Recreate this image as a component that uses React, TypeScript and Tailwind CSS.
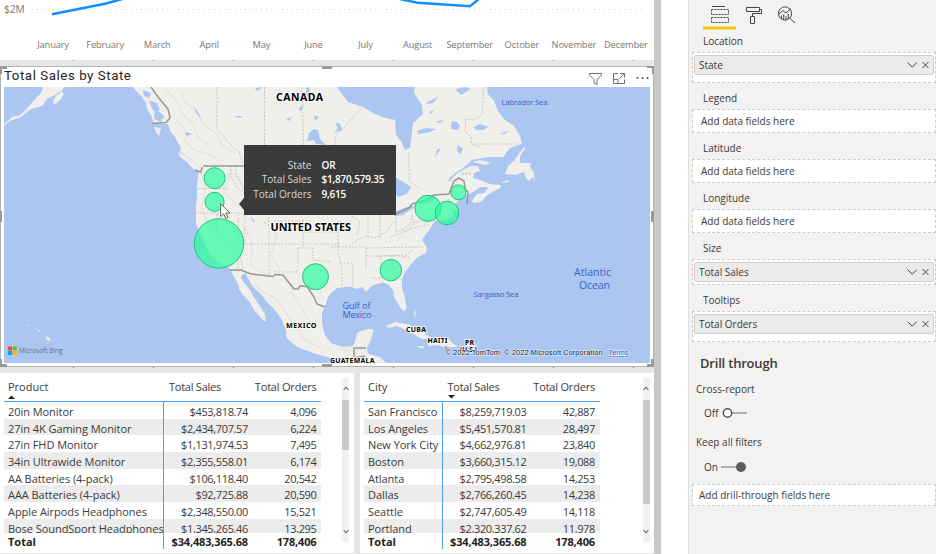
import React from "react";

const MONTHS = [
  "January", "February", "March", "April", "May", "June",
  "July", "August", "September", "October", "November", "December",
];

type Row = [string, string, string];

const PRODUCTS: Row[] = [
  ["20in Monitor", "$453,818.74", "4,096"],
  ["27in 4K Gaming Monitor", "$2,434,707.57", "6,224"],
  ["27in FHD Monitor", "$1,131,974.53", "7,495"],
  ["34in Ultrawide Monitor", "$2,355,558.01", "6,174"],
  ["AA Batteries (4-pack)", "$106,118.40", "20,542"],
  ["AAA Batteries (4-pack)", "$92,725.88", "20,590"],
  ["Apple Airpods Headphones", "$2,348,550.00", "15,521"],
  ["Bose SoundSport Headphones", "$1,345,265.46", "13,295"],
];

const CITIES: Row[] = [
  ["San Francisco", "$8,259,719.03", "42,887"],
  ["Los Angeles", "$5,451,570.81", "28,497"],
  ["New York City", "$4,662,976.81", "23,840"],
  ["Boston", "$3,660,315.12", "19,088"],
  ["Atlanta", "$2,795,498.58", "14,253"],
  ["Dallas", "$2,766,260.45", "14,238"],
  ["Seattle", "$2,747,605.49", "14,118"],
  ["Portland", "$2,320,337.62", "11,978"],
];

const BUBBLES = [
  [214.6, 178.2, 10.5],
  [214.6, 201.8, 9.5],
  [219, 243.5, 24.7],
  [315.5, 276.7, 13],
  [428, 208.3, 13],
  [447, 213, 11.8],
  [458.4, 192.3, 7.5],
  [390.9, 270.2, 10.7],
];

function LineChart() {
  return (
    <div className="relative h-[60px] shrink-0 bg-white">
      <svg className="block h-[30px] w-[654px]" viewBox="0 0 654 30">
        <path d="M32 9.5H644" stroke="#d2d2d2" strokeWidth="1" strokeDasharray="1 4.2" />
        <path d="M52 14.3L106 3.5L122 -1" fill="none" stroke="#118dff" strokeWidth="2.4" />
        <path d="M400 -1L418 2.8L470 6.2L479 -1" fill="none" stroke="#118dff" strokeWidth="2.4" />
      </svg>
      <span className="absolute left-[4px] top-[2px] text-[10.3px] leading-[14px] tracking-[-0.2px] text-[#777]">$2M</span>
      <div className="ml-[27px] flex h-[30px] w-[625px] items-center text-[9.3px] tracking-[-0.15px] text-[#777]">
        {MONTHS.map((m) => (
          <div key={m} className="w-[52.1px] text-center leading-[14px]">{m}</div>
        ))}
      </div>
    </div>
  );
}

function GridTicks() {
  return (
    <div className="flex gap-[79px] pl-[73px]">
      {[0, 1, 2, 3, 4, 5, 6, 7].map((i) => (
        <i key={i} className="block h-px w-px shrink-0 bg-[#777]" />
      ))}
    </div>
  );
}

function WorldMap() {
  return (
    <svg className="block h-[276px] w-[646px]" viewBox="4 87 646 276">
      <rect x="4" y="87" width="646" height="276" fill="#acc6f2" />
      <g fill="#f0efec">
        {/* North America */}
        <path d="M133 87L137 92L142 97L146 103L147 109L151 115L154 124L168 124L170 131L175 137L178 143L181 148L180 152L188 157L194 162L200 166L199 171L198 176L197 185L197 198L196 206L196 223L200 233L204 242L210 255L218 262L230 268.5L233 275L238 284L239 289L243 295L249 301L254 310L263 320.5L266 321L265 314L259 305L254 297L250 290L246 285L242 280L241 276L245 273L249 280L253 287L261 294L267 302L275 310L282 320L286 330L286.500 338L297 347L313 353L330 358L342 361L350 363L386 363L380 357L368 354L367 348L371 340L373.500 329.500L369 329L361 331L357 333L355 342L353 346L342 347L331 343L325 335L322 323L322 313L325 306L328 297L331 293L337 288L350 286.500L357 289L362 287L366 292L373 285L383 282.500L389 285L393.500 291L394 297L398 304L402 310L405 311L406.500 307L405 298L402 288L402 279L405 272L413 262L418 257L426 253L427 248L422 240L426 234L430 229L432 225L435 221L446 219.500L454 216L453 211L459 210L455 204L460 199L466 196L473 192L480 187L489 187L484 193L477 194L472 201L474 203L481 202L487 195L500 188L501 185L490 184L483 181L473 178L474 173L480 171L478 166L470 166L458 173L447 183L450 177L463 168L472 160L488 157L503 157L510 148L522 144L520 136L514 126L504 119L498 111L494 101L488 94L487 87L415 87L414 93L422 105L423 114L413 123L411 140L410 148L405 150L401 141L396 135L395 120L382 117L373 113L363 107L348 102L342 94L337 87Z" />
        {/* Alaska peninsula, Kodiak, Vancouver Island, Newfoundland, islands */}
        <path d="M4 124L12 117L20 115L29 106L36 98L41 93L43 87L65 87L61 91L53 96L47 99L42 106L31 109L21 117L10 121L4 126Z" />
        <path d="M53 101L56 96L62 91L64 94L60 100L54 105Z" />
        <path d="M154 127L161 128L159 136L157 134Z" />
        <path d="M178 152L186 156L195 163L202 167L201 172L194 170L187 162L181 158Z" />
        <path d="M524 147L518 155L514 161L508 166L505 174L515 175L524 172L526 178L529 181L533 177L535 183L534 173L530 167L531 163L520 163L520 156L525 149Z" />
        <path d="M473 162L480 160L491 163L485 165Z" />
        <path d="M386 326L395 322L410 325L422 332L433 339L422 339L408 331L397 326L388 328Z" />
        <path d="M428 344L436 337L447 338L454 344L458 347L444 347L438 345L429 346Z M416 346L424 346L423 349Z M465 343L474 344L472 347L465 346Z" />
        <path d="M27 325L30 325L29 326Z M35 328L41 331L40 332Z M46 336L51 339L49 341L46 339Z" />
        <path d="M502 182L508 180L509 182L503 183Z M414 313L416 310L415 318Z" />
      </g>
      {/* Relief shading */}
      <g fill="none" stroke="#e2e0dc" strokeWidth="1.1" opacity="0.9">
        <path d="M166 90L178 102L181 113L193 124L198 137L208 145M181 91L185 102L196 111L203 124L217 134L222 146L235 153M176 119L188 134L184 141L196 151L208 154L218 160" />
        <path d="M201 172L205 187L202 210L208 222L226 239M231 170L224 191L237 206M242 224L252 242L251 266L270 277M263 221L277 235L271 256L281 271M232 172L240 180L246 192" />
        <path d="M254 284L265 293L277 299L288 316L303 338L320 348M291 291L302 309L313 328M397 241L408 229L421 217L431 200M336 348L348 351L358 350M215 266L229 264" />
      </g>
      {/* Lakes and fjords */}
      <g fill="#acc6f2">
        <path d="M193 105L199 114L203 120L197 114Z M255 88L263 87L257 91Z M234 116L243 116L240 118Z M286 119L292 117L289 121Z M298 109L304 104L301 111Z M314 115L319 117L315 121Z M314 129L318 130L320 139L326 145L316 144L314 140L307 141L309 133Z M306 88L310 87L309 98L306 94Z" />
        <path d="M335 122L340 124L342 130L334 133L338 128Z M427 102L438 97L433 103L427 104Z M417 131L426 128L436 129L430 132L419 134Z M429 112L434 110L431 114Z M452 121L457 122L460 126L457 130L451 129Z M474 127L480 124L488 127L483 130L476 130Z M436 122L445 119L440 123Z M458 145L463 149L461 154L457 151Z M437 150L441 148L435 158Z M455 89L465 87L471 89L461 95Z M500 134L509 130L505 134Z M250 216L255 221L254 223Z" />
        <path d="M391 175L402 181L411 187L407 194L398 197L392 190Z M394 212L410 206L416 206L403 215L395 216Z M419 202L427 199L436 197L431 202L420 204Z" />
        <path d="M143 90L151 93L149 98L144 96Z M149 100L157 103L160 110L153 111Z M159 113L165 117L161 120Z M185 132L193 134L186 136Z M155 108L163 115L161 122L154 119Z M396 187L403 192L397 195Z" />
      </g>
      {/* State and province lines */}
      <g fill="none" stroke="#c9c5c1" strokeWidth="1" strokeDasharray="2 1.5">
        <path d="M217 87V130L228 142L239 152L244 166M264.500 87V166M302 87L304 166M335 145V137L363 107M409 152V181L421 189M196 213H274M198 189L211 188L230 189M231 166V176L238 189L244 193M217 214V234L241 257L243 270M245 215V244M236 166V174L244 190M229 244H340M269 217V245M269 244V276M274 221H303V246M298 248V272H274M298 248H313V260L330 262M303 219V232H338M338 221V252L342 270V286M331 247H366V269M352 244L358 239L367 236L375 238L386 232L393 222M368 215V240M380 215V238M352 216L360 222L357 235M340 263H353V286M366 256H401L411 258M366 248L423 247M381 255V280M392 256V274L402 280M371 278H390M396 214V232L404 229L412 222H431M412 215V222M391 237L410 229L430 224M377 256L403 255" />
        <path d="M484 87L482 115L474 120L466 119L465 131L471 137L472 144H517M462 174H472M474 145L481 147M462 174L470 173M238 214V274M402 258L413 250M440 208L441 218M448 199L451 212" />
      </g>
      {/* National borders */}
      <g fill="none" stroke="#9b9793" strokeWidth="1.5" strokeLinejoin="round">
        <path d="M151 87L158 97L168 109L170 118L166 122.500L152 123.500M203 166H244" />
        <path d="M230 270H241L251 274L273 276.500L275 274.500L283 275L290 284L294 289L298 289L300 286L307 286.500L314 297L317 304L325 307" />
        <path d="M394 215L410 207L412 204L426 200L434 195L449 194L454 181L459 178L464 181L465 189L468 192L467 204M354 358V348H366M354 358L365 356M195 170L201 172L202 167M446 346V351" />
      </g>
      <g fontFamily="'Noto Sans', 'Open Sans', sans-serif" fontWeight="700" fill="#000" stroke="#fff" strokeWidth="2" strokeOpacity="0.75" paintOrder="stroke">
        <text x="276" y="101" fontSize="10.5" textLength="47">CANADA</text>
        <text x="270.500" y="230.500" fontSize="10.500" textLength="80.500" lengthAdjust="spacingAndGlyphs">UNITED STATES</text>
        <text x="286" y="328" fontSize="7.200" textLength="30.500">MEXICO</text>
        <text x="406" y="331.500" fontSize="7" textLength="20">CUBA</text>
        <text x="427.500" y="343" fontSize="7" textLength="20">HAITI</text>
        <text x="465" y="345" fontSize="7" textLength="9">PR</text>
        <text x="460" y="352" fontSize="6.500" textLength="17">(U.S.)</text>
        <text x="330" y="363" fontSize="7" textLength="44.500">GUATEMALA</text>
      </g>
      <g fontFamily="'Open Sans', 'Noto Sans', sans-serif" fill="#3b62c4">
        <text x="501.500" y="105" fontSize="7.700" textLength="46">Labrador Sea</text>
        <text x="473.500" y="297" fontSize="7.700" textLength="45">Sargasso Sea</text>
        <g fontWeight="500">
          <text x="574" y="276" fontSize="10.500" textLength="37">Atlantic</text>
          <text x="579" y="288.500" fontSize="10.500" textLength="31">Ocean</text>
          <text x="342.500" y="308.500" fontSize="9.200" textLength="28">Gulf of</text>
          <text x="342.500" y="318" fontSize="9.200" textLength="29">Mexico</text>
        </g>
      </g>
      <g fill="rgba(40,255,160,0.7)" stroke="#1cc878" strokeWidth="1">
        {BUBBLES.map(([cx, cy, r], i) => (
          <circle key={i} cx={cx} cy={cy} r={r} />
        ))}
      </g>
      <path d="M8 346.500h4v4h-4z" fill="#f25022" />
      <path d="M12.700 346.500h4v4h-4z" fill="#7fba00" />
      <path d="M8 351h4v4h-4z" fill="#00a4ef" />
      <path d="M12.700 351h4v4h-4z" fill="#ffb900" />
      <text x="19" y="353.400" fontSize="7.300" textLength="43.500" lengthAdjust="spacingAndGlyphs" fontFamily="'Open Sans', sans-serif" fill="#6d6d6d">Microsoft Bing</text>
      <g fontFamily="'Liberation Sans', sans-serif" fontSize="7.400" stroke="#fff" strokeWidth="1.500" strokeOpacity="0.5" paintOrder="stroke">
        <text x="445.500" y="355" textLength="157" fill="#222">© 2022 TomTom, © 2022 Microsoft Corporation</text>
        <text x="608.500" y="355" textLength="20" fill="#3b62c4" textDecoration="underline">Terms</text>
      </g>
    </svg>
  );
}

function MapTooltip() {
  const rows = [
    ["State", "OR"],
    ["Total Sales", "$1,870,579.35"],
    ["Total Orders", "9,615"],
  ];
  return (
    <div className="absolute left-[244px] top-[79px] flex h-[70px] w-[152px] flex-col bg-[#3b3b3b] pt-[13px] text-[10px]">
      <svg className="absolute left-[-5px] top-[53px] h-[12px] w-[5px]" viewBox="0 0 5 12">
        <path d="M5 0V12L0 6Z" fill="#3b3b3b" />
      </svg>
      {rows.map(([k, v]) => (
        <div key={k} className="flex h-[14.500px] items-center">
          <span className="w-[67.500px] text-right text-[#d8d8d8]">{k}</span>
          <span className="ml-[10px] font-semibold tracking-[-0.2px] text-white">{v}</span>
        </div>
      ))}
    </div>
  );
}

function Handles() {
  const c = "absolute bg-[#999]";
  return (
    <>
      <i className={`${c} left-0 top-0 h-[3px] w-[7px]`} />
      <i className={`${c} left-0 top-0 h-[8px] w-[2px]`} />
      <i className={`${c} left-[322px] top-0 h-[3px] w-[10px]`} />
      <i className={`${c} right-0 top-0 h-[2px] w-[7px]`} />
      <i className={`${c} right-0 top-0 h-[8px] w-[2px]`} />
      <i className={`${c} left-0 top-[145px] h-[11px] w-[2px]`} />
      <i className={`${c} right-0 top-[145px] h-[11px] w-[3px]`} />
      <i className={`${c} bottom-0 left-0 h-[3px] w-[7px]`} />
      <i className={`${c} bottom-0 left-0 h-[8px] w-[2px]`} />
      <i className={`${c} bottom-0 left-[322px] h-[3px] w-[10px]`} />
      <i className={`${c} bottom-0 right-0 h-[3px] w-[7px]`} />
      <i className={`${c} bottom-0 right-0 h-[8px] w-[3px]`} />
    </>
  );
}

function MapVisual() {
  return (
    <section className="relative h-[301px] w-[654px] shrink-0 border border-[#b3b3b3] bg-white">
      <div className="flex h-[20px] items-start justify-between pl-[3px] pr-[3px]">
        <h2 className="font-['Roboto',sans-serif] text-[13.300px] leading-[17px] tracking-[0.550px] text-[#252423]">
          Total Sales by State
        </h2>
        <svg className="mt-[5px] h-[14px] w-[62px]" viewBox="0 0 62 14" fill="none" stroke="#6f6f6f" strokeWidth="1">
          <path d="M1.500 1.500H13.500V3L9 7.500V12.500L6 11V7.500L1.500 3Z" />
          <path d="M30 1.500H25.500V11.500H36.500V7.500M25.500 7.500H30V11.500M32 1.500H36.500V5.500M36.500 1.500L31 7" />
          <g fill="#555" stroke="none">
            <circle cx="49.500" cy="6" r="1" />
            <circle cx="54.500" cy="6" r="1" />
            <circle cx="59.500" cy="6" r="1" />
          </g>
        </svg>
      </div>
      <div className="pl-[3px]">
        <WorldMap />
      </div>
      <div className="absolute left-[-1px] top-[-1px]">
        <MapTooltip />
        <svg className="absolute left-[220px] top-[137px] h-[18px] w-[12px]" viewBox="0 0 12 18">
          <path d="M0.700 0.800V13.600L3.600 10.800L5.800 15.400L8 14.400L5.900 10H10Z" fill="#fff" stroke="#555" strokeWidth="0.900" />
        </svg>
      </div>
      <div className="absolute -inset-px">
        <Handles />
      </div>
    </section>
  );
}

type TableProps = {
  first: string;
  rows: Row[];
  firstCol: string;
  salesCol: string;
  ordersCol: string;
  scroll: string;
  thumb: string;
  sorted: "first" | "sales";
};

function DataTable({ first, rows, firstCol, salesCol, ordersCol, scroll, thumb, sorted }: TableProps) {
  return (
    <div className="flex h-full pl-[4px] text-[11px] text-[#3b3a39]">
      <div className="flex flex-col">
        <div className="flex h-[29px] border-b border-[#4aa3f5]">
          <div className={`${firstCol} pl-[4px] pt-[6px] leading-[16px]`}>
            {first}
            {sorted === "first" && (
              <svg className="h-[4px] w-[8px]" viewBox="0 0 8 4"><path d="M0 4H7L3.500 0.500Z" fill="#222" /></svg>
            )}
          </div>
          <div className={`${salesCol} pl-[5px] pt-[6px] leading-[16px]`}>
            <span className="tracking-[-0.250px]">Total Sales</span>
            {sorted === "sales" && (
              <svg className="h-[4px] w-[8px]" viewBox="0 0 8 4"><path d="M0 0H7L3.500 3.500Z" fill="#222" /></svg>
            )}
          </div>
          <div className={`${ordersCol} pr-[4.500px] pt-[6px] text-right leading-[16px] tracking-[-0.200px]`}>Total Orders</div>
        </div>
        <div className="h-[131px] overflow-hidden">
          {rows.map((r, i) => (
            <div key={r[0]} className={`flex h-[16.700px] leading-[17px] ${i % 2 ? "bg-[#ececec]" : "bg-white"}`}>
              <div className={`${firstCol} whitespace-nowrap border-r border-[#4aa3f5] pl-[4px] pt-px tracking-[-0.050px]`}>{r[0]}</div>
              <div className={`${salesCol} pr-[5px] pt-px text-right tracking-[-0.350px]`}>{r[1]}</div>
              <div className={`${ordersCol} pr-[4.500px] pt-px text-right tracking-[-0.350px]`}>{r[2]}</div>
            </div>
          ))}
        </div>
        <div className="flex h-[16px] font-bold leading-[18px] text-[#222]">
          <div className={`${firstCol} border-r border-[#4aa3f5] pl-[4px]`}>Total</div>
          <div className={`${salesCol} pr-[5px] text-right tracking-[-0.150px]`}>$34,483,365.68</div>
          <div className={`${ordersCol} pr-[4.500px] text-right tracking-[-0.150px]`}>178,406</div>
        </div>
      </div>
      <div className={`${scroll} mt-[5px] flex h-[164px] w-[7px] flex-col items-center bg-[#f1f1f1]`}>
        <svg className="mt-[8px] h-[5px] w-[6px]" viewBox="0 0 6 5"><path d="M0.700 4L3 1L5.300 4" fill="none" stroke="#444" /></svg>
        <div className={`${thumb} mt-[9px] w-[7px] bg-[#c9c9c9]`} />
        <svg className="mb-[8px] mt-auto h-[5px] w-[6px]" viewBox="0 0 6 5"><path d="M0.700 1L3 4L5.300 1" fill="none" stroke="#444" /></svg>
      </div>
    </div>
  );
}

function FieldChip({ name }: { name: string }) {
  return (
    <div className="flex h-[20px] items-center rounded-[2px] border border-[#d2d0ce] bg-[#edebe9] pl-[4px]">
      <span className="flex-1 leading-[16px]">{name}</span>
      <svg className="h-[8px] w-[23px]" viewBox="0 0 23 8" fill="none" stroke="#444" strokeWidth="1">
        <path d="M0.700 1.700L5.200 6.200L9.700 1.700M15.500 1L21.500 7M21.500 1L15.500 7" />
      </svg>
      <i className="w-[3px]" />
    </div>
  );
}

function Well({ label, field, box }: { label: string; field?: string; box: string }) {
  return (
    <div className="mb-[4px]">
      <div className="flex h-[22px] items-center pl-[11px]">{label}</div>
      <div className={`${box} border border-dashed border-[#cfcdcb] bg-white`}>
        {field ? (
          <div className="pl-px pr-px pt-[2px]"><FieldChip name={field} /></div>
        ) : (
          <div className="flex h-full items-center pl-[8px]">Add data fields here</div>
        )}
      </div>
    </div>
  );
}

function PaneTabs() {
  return (
    <div className="h-[30px] pl-[11px]">
      <svg className="block h-[30px] w-[100px]" viewBox="699 0 100 30" fill="none" stroke="#444" strokeWidth="1">
        <path d="M708 6.500H721" />
        <path d="M707.500 9.500H724.500V14.500H707.500ZM707.500 17.500H724.500V22.500H707.500Z" strokeDasharray="2 1" />
        <path d="M742.500 7.500H755.500V11.500H742.500ZM755.500 9.500H757.500V13.500H748.500V16M746.500 16.500H750.500V23.500H746.500Z" strokeLinejoin="round" />
        <circle cx="781" cy="13.500" r="6.600" />
        <path d="M785.800 18.200L791 23M775 14L779 10.500L782 13L787 8.500M777.500 19V15.500M779.700 20V14.500M782 20V16M784.300 19V14" />
        <path d="M699 26.500H732V29.500H699Z" fill="#f2c811" stroke="none" />
      </svg>
    </div>
  );
}

function FieldsPane() {
  return (
    <aside className="flex h-[554px] w-[248px] shrink-0 flex-col border-l border-[#e1dfdd] bg-[#f3f2f1] pl-[3px] text-[10px] text-[#3b3a39]">
      <PaneTabs />
      <Well label="Location" field="State" box="h-[31px]" />
      <Well label="Legend" box="h-[24px]" />
      <Well label="Latitude" box="h-[24px]" />
      <Well label="Longitude" box="h-[24px]" />
      <Well label="Size" field="Total Sales" box="h-[26px]" />
      <Well label="Tooltips" field="Total Orders" box="h-[31px]" />
      <h3 className="mt-[7px] pl-[8px] text-[13px] font-semibold leading-[20px] tracking-[-0.200px]">Drill through</h3>
      <div className="mt-[8px] pl-[4px] leading-[16px]">Cross-report</div>
      <div className="mt-[8px] flex h-[16px] items-center pl-[12px]">
        Off
        <svg className="ml-[3px] h-[12px] w-[26px]" viewBox="0 0 26 12">
          <path d="M10 6H25" stroke="#999" strokeWidth="1.500" />
          <circle cx="5.500" cy="6" r="4.200" fill="#fff" stroke="#555" strokeWidth="1.500" />
        </svg>
      </div>
      <div className="mt-[13px] pl-[4px] leading-[16px]">Keep all filters</div>
      <div className="mt-[9px] flex h-[16px] items-center pl-[12px]">
        On
        <svg className="ml-[3px] h-[12px] w-[26px]" viewBox="0 0 26 12">
          <path d="M0 6H16" stroke="#999" strokeWidth="1.500" />
          <circle cx="20" cy="6" r="5" fill="#5d5c5b" />
        </svg>
      </div>
      <div className="mt-[9px] flex h-[22px] items-center border border-dashed border-[#cfcdcb] bg-white pl-[6px]">
        Add drill-through fields here
      </div>
    </aside>
  );
}

export default function App() {
  return (
    <div className="flex h-[554px] w-[936px] overflow-hidden bg-white font-['Open_Sans','Noto_Sans',sans-serif]">
      <main className="flex w-[654px] shrink-0 flex-col bg-[#e6e6e6]">
        <LineChart />
        <div className="h-[6px] shrink-0"><GridTicks /></div>
        <MapVisual />
        <div className="h-[6px] shrink-0"><GridTicks /></div>
        <div className="flex h-[180px] shrink-0 gap-[6px]">
          <div className="w-[354px] bg-white">
            <DataTable first="Product" rows={PRODUCTS} firstCol="w-[160px]" salesCol="w-[89px]" ordersCol="w-[68px]" scroll="ml-[21px]" thumb="h-[50px]" sorted="first" />
          </div>
          <div className="flex-1 bg-white">
            <DataTable first="City" rows={CITIES} firstCol="w-[78.500px]" salesCol="w-[89px]" ordersCol="w-[68px]" scroll="ml-[43px]" thumb="h-[104px]" sorted="sales" />
          </div>
        </div>
      </main>
      <div className="w-[7px] shrink-0 bg-[#c8c8c8]" />
      <div className="w-[27px] shrink-0 bg-white" />
      <FieldsPane />
    </div>
  );
}
